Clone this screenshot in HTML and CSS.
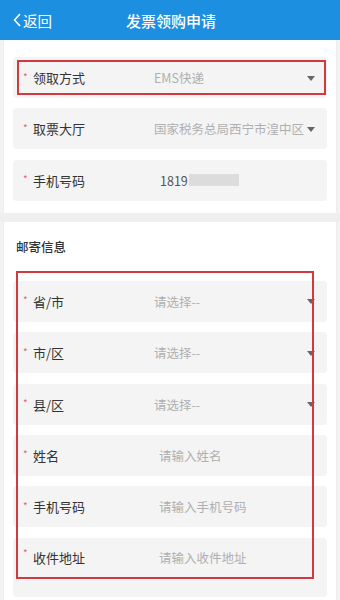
FILE: index.html
```html
<!DOCTYPE html>
<html lang="zh">
<head>
<meta charset="utf-8">
<title>发票领购申请</title>
<link rel="stylesheet" href="styles.css">
</head>
<body>
<header class="topbar">
  <a class="back"><svg class="chev" width="8" height="14" viewBox="0 0 8 14"><path d="M7 1 L1.5 7 L7 13" fill="none" stroke="#fff" stroke-width="1.6"/></svg>返回</a>
  <h1 class="title">发票领购申请</h1>
</header>

<section class="panel first">
  <div class="rows">
    <div class="row">
      <span class="star">*</span><span class="label">领取方式</span>
      <span class="value">EMS快递</span>
      <span class="caret"></span>
    </div>
    <div class="row">
      <span class="star">*</span><span class="label">取票大厅</span>
      <span class="value">国家税务总局西宁市湟中区</span>
      <span class="caret"></span>
    </div>
    <div class="row">
      <span class="star">*</span><span class="label">手机号码</span>
      <span class="value dark">1819<span class="blur"></span></span>
    </div>
  </div>
  <div class="mark mark-one"></div>
</section>

<div class="band"></div>

<section class="panel second">
  <h2 class="sub">邮寄信息</h2>
  <div class="rows">
    <div class="row">
      <span class="star">*</span><span class="label">省/市</span>
      <span class="value">请选择--</span>
      <span class="caret"></span>
    </div>
    <div class="row">
      <span class="star">*</span><span class="label">市/区</span>
      <span class="value">请选择--</span>
      <span class="caret"></span>
    </div>
    <div class="row">
      <span class="star">*</span><span class="label">县/区</span>
      <span class="value">请选择--</span>
      <span class="caret"></span>
    </div>
    <div class="row">
      <span class="star">*</span><span class="label">姓名</span>
      <span class="value input">请输入姓名</span>
    </div>
    <div class="row">
      <span class="star">*</span><span class="label">手机号码</span>
      <span class="value input">请输入手机号码</span>
    </div>
    <div class="row tall">
      <span class="star">*</span><span class="label">收件地址</span>
      <span class="value input">请输入收件地址</span>
    </div>
  </div>
  <div class="mark mark-two"></div>
</section>
</body>
</html>
```

FILE: styles.css
```css
* { box-sizing: border-box; margin: 0; padding: 0; }
html, body { height: 100%; }
body {
  font-family: "Noto Sans CJK SC", "Noto Sans", "Liberation Sans", sans-serif;
  background: #f3f3f3;
  width: 340px;
  overflow: hidden;
  color: #333;
}
.topbar {
  height: 40px;
  background: #1d8fe1;
  position: relative;
  display: flex;
  align-items: center;
  justify-content: center;
}
.back {
  position: absolute;
  left: 13px;
  top: 0;
  height: 40px;
  display: flex;
  align-items: center;
  gap: 2px;
  color: #fff;
  font-size: 14.5px;
}
.title {
  color: #fff;
  font-size: 15px;
  font-weight: 500;
  margin-left: 2px;
}
.panel {
  background: #fff;
  margin: 0 3px;
  position: relative;
  border-left: 1px solid #ececec;
  border-right: 1px solid #ececec;
}
.first { padding: 17px 9px 12px 9px; }
.band { height: 9px; background: #efefef; }
.second { padding: 16px 9px 4px 9px; height: 378px; }
.sub {
  font-size: 12.5px;
  font-weight: 500;
  line-height: 18px;
  color: #333;
  padding-left: 3px;
  margin-bottom: 25px;
}
.rows { display: flex; flex-direction: column; gap: 10.4px; }
.row {
  height: 41px;
  background: #f4f4f4;
  border-radius: 4px;
  display: flex;
  align-items: center;
  position: relative;
  padding-left: 10px;
}
.row.tall { height: 59px; align-items: flex-start; padding-top: 10px; }
.star { color: #e2686c; font-size: 10px; width: 10px; margin-top: -3px; }
.label { font-size: 13px; color: #333; width: 121px; }
.value { font-size: 12.5px; color: #b0b0b0; white-space: nowrap; display: flex; align-items: center; }
.value.input { margin-left: 5px; }
.value.dark { color: #555; margin-left: 6px; }
.blur { display: inline-block; width: 50px; height: 12px; background: #dcdcdc; margin-left: 1px; }
.caret {
  position: absolute;
  right: 12px;
  top: 50%;
  margin-top: -2px;
  width: 0; height: 0;
  border-left: 4.5px solid transparent;
  border-right: 4.5px solid transparent;
  border-top: 5px solid #666;
}
.mark {
  position: absolute;
  border: 2px solid #d23a40;
  pointer-events: none;
}
.mark-one { left: 13px; top: 20px; width: 309px; height: 35px; }
.mark-two { left: 12px; top: 49px; width: 298px; height: 308px; }
```
